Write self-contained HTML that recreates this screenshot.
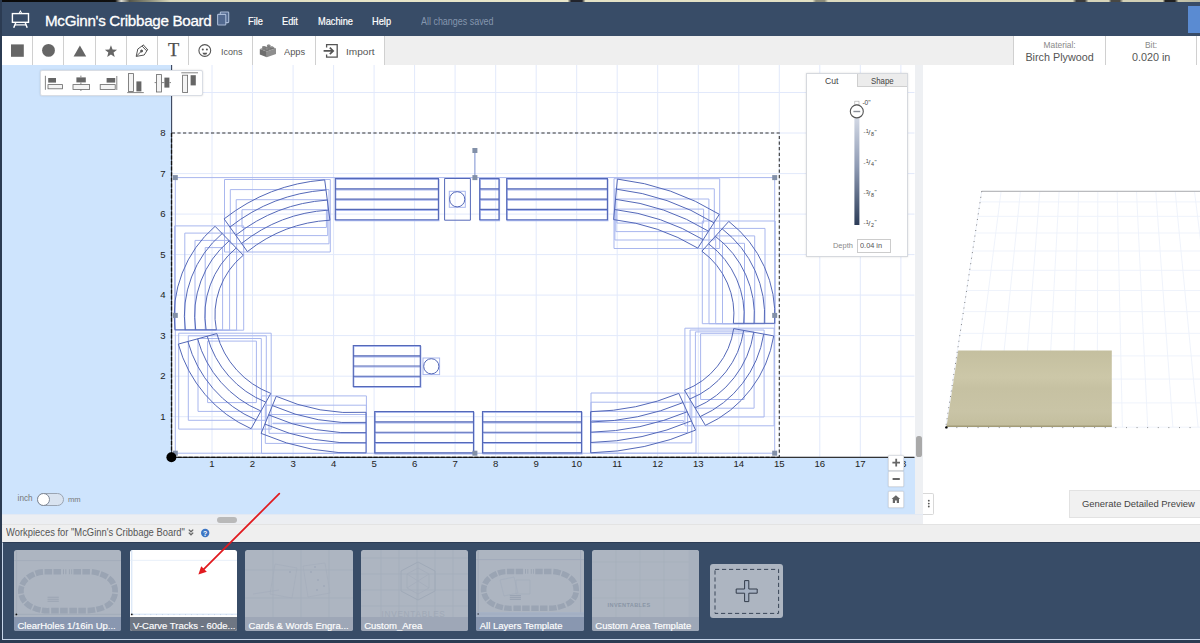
<!DOCTYPE html><html><head><meta charset="utf-8"><title>McGinn's Cribbage Board</title><style>
*{box-sizing:border-box;margin:0;padding:0}
html,body{width:1200px;height:643px;overflow:hidden;background:#fff}
body{position:relative;font-family:"Liberation Sans",sans-serif;color:#555}
.abs{position:absolute}
.t{position:absolute;white-space:nowrap;line-height:1}
#top{left:0;top:0;width:1200px;height:2.2px;background:linear-gradient(90deg,#0a0a0a 0,#101010 9.6%,#deded4 10.1%,#55564a 10.8%,#8f907c 12.5%,#d9d7ba 14.2%,#e6e4c8 30%,#e8e6ca 47.3%,#22242c 47.6%,#22242c 48.5%,#e4e2c6 48.8%,#e2e0c4 67.7%,#8a8a78 68%,#8a8a78 68.7%,#dddbc0 69%,#dbd9be 89.4%,#3a3a3a 89.7%,#3a3a3a 90.4%,#d6d4ba 90.7%,#d6d4ba 92.4%,#484844 92.6%,#484844 93.3%,#d2d0b6 93.6%,#d2d0b6 96.9%,#202020 97.1%,#202020 97.9%,#c8c6ac 98.2%,#b8b8a2 100%)}
#hdr{left:0;top:2px;width:1200px;height:34px;background:#384c67}
#tb{left:2px;top:36px;width:1198px;height:29.7px;background:#efefef;border-bottom:1px solid #d4d4d4}
.cell{position:absolute;top:36px;height:29px;background:#fff;border-right:1px solid #d0d0d0}
#left{left:0;top:65px;width:915px;height:450px;background:#cee4fd;overflow:hidden}
#canvas{left:172px;top:65px;width:742.5px;height:392px;background:#fff}
#lb{left:0;top:0;width:2px;height:643px;background:#2b3b52}
</style></head><body><div class="abs" id="top"></div>
<div class="abs" id="hdr"></div>
<div class="abs" style="left:1188px;top:6px;width:12px;height:27px;background:#5a8bd2"></div>
<svg class="abs" style="left:8px;top:8px" width="26" height="24" viewBox="8 8 26 24">
<g fill="none" stroke="#fff" stroke-width="1.4" stroke-linejoin="miter">
<rect x="12.4" y="13.6" width="16.1" height="8.7"/>
<path d="M15.7 23L13.7 27.8M25.3 23L27.2 27.8" stroke-width="1.5"/><path d="M14.8 24.9H26.2" stroke-width="1.2"/>
</g><path d="M18.6 13.2L20.4 9.9L22.2 13.2Z" fill="#fff"/><path d="M19.9 12.9L20.4 11.9L20.9 12.9Z" fill="#384c67"/></svg>
<div class="t" style="left:45px;top:12.7px;font-size:15.2px;color:#fff;-webkit-text-stroke:0.3px #fff;letter-spacing:-0.3px" id="title">McGinn's Cribbage Board</div>
<svg class="abs" style="left:215px;top:10px" width="16" height="18" viewBox="0 0 16 18"><g fill="#52698f" stroke="#a9bad6" stroke-width="1.1"><rect x="5.3" y="2" width="8.4" height="10.6" rx="0.8"/><rect x="2.6" y="4.4" width="8.2" height="10.6" rx="0.8"/></g></svg>
<div class="t" style="left:248.2px;top:17px;font-size:10.4px;color:#fff;-webkit-text-stroke:0.2px #fff;transform:scaleX(0.89);transform-origin:0 0" id="m1">File</div>
<div class="t" style="left:282px;top:17px;font-size:10.4px;color:#fff;-webkit-text-stroke:0.2px #fff;transform:scaleX(0.89);transform-origin:0 0" id="m2">Edit</div>
<div class="t" style="left:317.5px;top:17px;font-size:10.4px;color:#fff;-webkit-text-stroke:0.2px #fff;transform:scaleX(0.89);transform-origin:0 0" id="m3">Machine</div>
<div class="t" style="left:371.5px;top:17px;font-size:10.4px;color:#fff;-webkit-text-stroke:0.2px #fff;transform:scaleX(0.89);transform-origin:0 0" id="m4">Help</div>
<div class="t" style="left:420.5px;top:17.2px;font-size:10.3px;color:#8596ae;transform:scaleX(0.868);transform-origin:0 0" id="saved">All changes saved</div>
<div class="abs" id="tb"></div>
<div class="cell" style="left:2px;width:31.2px"></div>
<div class="cell" style="left:33.2px;width:31.2px"></div>
<div class="cell" style="left:64.4px;width:31.2px"></div>
<div class="cell" style="left:95.6px;width:31.2px"></div>
<div class="cell" style="left:126.8px;width:31.2px"></div>
<div class="cell" style="left:158px;width:31.2px"></div>
<div class="cell" style="left:189.2px;width:63.6px"></div>
<div class="cell" style="left:252.8px;width:62.9px"></div>
<div class="cell" style="left:315.7px;width:69.6px"></div>
<div class="cell" style="left:1012.8px;width:92.8px;border-left:1px solid #d0d0d0"></div>
<div class="cell" style="left:1105.6px;width:91.4px"></div>
<div class="cell" style="left:1197.4px;width:3px;border:0"></div>
<svg class="abs" style="left:0;top:36px" width="400" height="29" viewBox="0 36 400 29">
<g fill="#666">
<rect x="11" y="44.4" width="12.8" height="12.4"/>
<circle cx="48.5" cy="50.4" r="6.4"/>
<path d="M79.9 45.6L86.2 56.4H73.6Z"/>
<path d="M110.95 45.30L112.57 49.48L117.04 49.72L113.57 52.55L114.71 56.88L110.95 54.45L107.19 56.88L108.33 52.55L104.86 49.72L109.33 49.48Z"/>
</g>
<g fill="none" stroke="#555" stroke-width="1" stroke-linejoin="round">
<path d="M136.2 56.4l1.6-7.4 5.6-4 4.2 4.6-3.4 5.4zM136.4 56.2l4.6-4.6M143.4 45l-1.2 1.2 4.2 4.4 1.2-1.4"/>
<circle cx="141.6" cy="51" r="1" fill="#555"/>
<circle cx="204.8" cy="50.5" r="5.9" stroke-width="1.1"/>
<path d="M202.5 52.7h4.7a2.35 2.1 0 0 1-4.7 0z" fill="#555" stroke="none"/>
</g>
<circle cx="202.8" cy="49.4" r="1" fill="#555"/><circle cx="206.9" cy="49.4" r="1" fill="#555"/>
<path d="M259.8 48.9L266.8 51.6V57.3L259.8 54.4Z" fill="#6e6e6e"/>
<path d="M266.8 51.6L276 48.3V54L266.8 57.3Z" fill="#8e8e8e"/>
<path d="M259.8 48.9L268.6 45.9L276 48.3L266.8 51.6Z" fill="#808080"/>
<g fill="#6a6a6a"><ellipse cx="264" cy="47.3" rx="1.9" ry="1.05"/><ellipse cx="268.7" cy="45.8" rx="1.9" ry="1.05"/><ellipse cx="267" cy="49.4" rx="1.9" ry="1.05"/><ellipse cx="271.8" cy="47.7" rx="1.9" ry="1.05"/></g>
<g fill="#8c8c8c"><ellipse cx="264" cy="46.8" rx="1.7" ry="0.85"/><ellipse cx="268.7" cy="45.3" rx="1.7" ry="0.85"/><ellipse cx="267" cy="48.9" rx="1.7" ry="0.85"/><ellipse cx="271.8" cy="47.2" rx="1.7" ry="0.85"/></g>
<g fill="none" stroke="#555" stroke-width="1.5">
<path d="M326.6 47.4V44.6H337.2V57.2H326.6V54.6" stroke-width="1.3"/>
<path d="M323.6 50.9H333M329.8 47.6l3.4 3.3-3.4 3.3" stroke-width="1.7"/>
</g>
</svg>
<div class="t" style="left:168.1px;top:41.3px;font-size:18.4px;font-family:'Liberation Serif',serif;color:#4f4f4f;-webkit-text-stroke:0.25px #4f4f4f" id="ticon">T</div>
<div class="t" style="left:220.6px;top:46.6px;font-size:9.9px;color:#555;transform:scaleX(0.91);transform-origin:0 0" id="l1">Icons</div>
<div class="t" style="left:284px;top:46.6px;font-size:9.9px;color:#555;transform:scaleX(0.94);transform-origin:0 0" id="l2">Apps</div>
<div class="t" style="left:346.4px;top:46.6px;font-size:9.9px;color:#555;transform:scaleX(1.02);transform-origin:0 0" id="l3">Import</div>
<div class="t" style="left:1013.6px;width:92px;text-align:center;top:40.8px;font-size:8.4px;color:#888" id="mat1">Material:</div>
<div class="t" style="left:1013.6px;width:92px;text-align:center;top:52.2px;font-size:10.8px;color:#555" id="mat2">Birch Plywood</div>
<div class="t" style="left:1105.6px;width:91px;text-align:center;top:40.8px;font-size:8.4px;color:#888" id="bit1">Bit:</div>
<div class="t" style="left:1105.6px;width:91px;text-align:center;top:52.2px;font-size:10.8px;color:#555" id="bit2">0.020 in</div>
<div class="abs" id="left"></div>
<div class="abs" id="canvas"></div>
<svg class="abs" style="left:0;top:65px" width="915" height="450" viewBox="0 65 915 450"><path d="M171.5 65V457M212.0 65V457M252.5 65V457M293.1 65V457M333.6 65V457M374.1 65V457M414.6 65V457M455.1 65V457M495.7 65V457M536.2 65V457M576.7 65V457M617.2 65V457M657.7 65V457M698.3 65V457M738.8 65V457M779.3 65V457M819.8 65V457M860.3 65V457M900.9 65V457M172 457.2H914.5M172 416.7H914.5M172 376.2H914.5M172 335.6H914.5M172 295.1H914.5M172 254.6H914.5M172 214.1H914.5M172 173.6H914.5M172 133.0H914.5M172 92.5H914.5" stroke="#e2e9fb" stroke-width="1" fill="none"/><path d="M171.6 65V457.6" stroke="#39445c" stroke-width="1.1" fill="none"/><path d="M171 457.3H914.5" stroke="#333" stroke-width="1.2" fill="none"/><path d="M171.8 133H779.3V457" stroke="#333" stroke-width="1.1" stroke-dasharray="3.2 2.4" fill="none"/><path d="M171.5 133V457.3H779.3" stroke="#111" stroke-width="1.3" stroke-dasharray="4 1.6" fill="none"/><rect x="175.3" y="177.6" width="599.4" height="275.6" fill="none" stroke="#a9b7ee" stroke-width="1"/><path d="M474.9 177.6V150.5" stroke="#7a8fd0" stroke-width="1" fill="none"/><path d="M224.5 179.5H330.3V252.0H224.5ZM230.3 189.6H329.0V243.8H230.3ZM236.2 199.7H327.7V235.6H236.2ZM242.0 209.7H326.4V227.5H242.0ZM174.6 225.9H243.7V330.2H174.6ZM184.8 233.1H236.6V330.2H184.8ZM195.0 240.4H229.6V330.2H195.0ZM205.2 247.6H222.6V330.2H205.2ZM614.0 178.7H719.7V248.5H614.0ZM614.9 188.8H714.3V240.0H614.9ZM615.9 199.0H708.9V231.6H615.9ZM616.9 209.1H703.6V223.1H616.9ZM702.3 221.0H775.2V323.7H702.3ZM709.0 228.4H765.0V323.7H709.0ZM715.7 235.9H754.7V323.7H715.7ZM722.5 243.3H744.5V323.7H722.5ZM178.7 333.2H271.2V429.1H178.7ZM188.3 335.8H266.3V420.3H188.3ZM198.0 338.5H261.3V411.4H198.0ZM207.6 341.1H256.4V402.6H207.6ZM261.5 395.9H366.4V453.5H261.5ZM265.3 405.2H366.4V443.4H265.3ZM269.0 414.5H366.4V433.3H269.0ZM272.8 423.7H366.4V423.2H272.8ZM591.0 393.0H696.0V453.2H591.0ZM591.0 402.2H691.8V442.9H591.0ZM591.0 411.4H687.6V432.6H591.0ZM591.0 420.5H683.4V422.4H591.0ZM684.9 328.2H774.1V425.8H684.9ZM690.1 330.0H764.1V417.0H690.1ZM695.4 331.9H754.1V408.2H695.4ZM700.6 333.7H744.1V399.5H700.6Z" fill="none" stroke="#a9b7ee" stroke-width="1"/><rect x="449.3" y="191.3" width="16" height="16" fill="none" stroke="#a9b7ee" stroke-width="1"/><rect x="423" y="358" width="16.6" height="16.6" fill="none" stroke="#a9b7ee" stroke-width="1"/><path d="M224.1 218.9A186.4 186.4 0 0 1 324.7 179.9M229.9 227.1A176.1 176.1 0 0 1 326.0 190.0M235.8 235.2A165.8 165.8 0 0 1 327.3 200.1M241.6 243.4A155.5 155.5 0 0 1 328.6 210.1M247.4 251.6A145.2 145.2 0 0 1 329.9 220.2M224.1 218.9L247.4 251.6M324.7 179.9L329.9 220.2M175.0 329.8A118.6 118.6 0 0 1 215.1 226.3M185.3 329.8A108.3 108.3 0 0 1 222.2 233.5M195.7 329.8A98.0 98.0 0 0 1 229.2 240.8M206.1 329.8A87.7 87.7 0 0 1 236.2 248.0M216.4 329.8A77.4 77.4 0 0 1 243.3 255.2M175.0 329.8L216.4 329.8M215.1 226.3L243.3 255.2M617.4 179.1A249.6 249.6 0 0 1 719.3 214.3M616.5 189.2A239.3 239.3 0 0 1 713.9 222.8M615.5 199.3A229.0 229.0 0 0 1 708.5 231.2M614.5 209.5A218.7 218.7 0 0 1 703.2 239.7M613.6 219.6A208.4 208.4 0 0 1 697.8 248.1M617.4 179.1L613.6 219.6M719.3 214.3L697.8 248.1M728.8 221.4A119.5 119.5 0 0 1 774.6 323.3M722.1 228.8A109.2 109.2 0 0 1 764.3 323.3M715.3 236.3A98.9 98.9 0 0 1 754.0 323.3M708.6 243.8A88.6 88.6 0 0 1 743.7 323.3M701.9 251.2A78.3 78.3 0 0 1 733.4 323.3M728.8 221.4L701.9 251.2M774.6 323.3L733.4 323.3M178.3 344.1A130.3 130.3 0 0 0 251.1 428.7M187.9 341.5A120.0 120.0 0 0 0 256.0 419.9M197.6 338.9A109.7 109.7 0 0 0 260.9 411.0M207.2 336.2A99.4 99.4 0 0 0 265.9 402.2M216.8 333.6A89.1 89.1 0 0 0 270.8 393.4M178.3 344.1L216.8 333.6M251.1 428.7L270.8 393.4M261.1 433.4A232.3 232.3 0 0 0 366.0 452.8M264.9 424.1A222.0 222.0 0 0 0 366.0 442.7M268.6 414.9A211.7 211.7 0 0 0 366.0 432.6M272.4 405.6A201.4 201.4 0 0 0 366.0 422.4M276.2 396.3A191.1 191.1 0 0 0 366.0 412.3M261.1 433.4L276.2 396.3M366.0 452.8L366.0 412.3M590.6 452.8A282.8 282.8 0 0 0 695.6 430.1M590.6 442.5A272.5 272.5 0 0 0 691.4 420.9M590.6 432.2A262.2 262.2 0 0 0 687.2 411.8M590.6 422.0A251.9 251.9 0 0 0 683.0 402.6M590.6 411.7A241.6 241.6 0 0 0 678.8 393.4M590.6 452.8L590.6 411.7M695.6 430.1L678.8 393.4M773.7 335.9A119.0 119.0 0 0 1 705.4 425.4M763.7 334.1A108.7 108.7 0 0 1 700.2 416.6M753.7 332.2A98.4 98.4 0 0 1 695.0 407.9M743.7 330.4A88.1 88.1 0 0 1 689.7 399.1M733.7 328.6A77.8 77.8 0 0 1 684.5 390.3M773.7 335.9L733.7 328.6M705.4 425.4L684.5 390.3M444.6 178.5H470.4V220.2H444.6Z" fill="none" stroke="#5468b8" stroke-width="1"/><path d="M335.3 178.5H438.4V219.7H335.3ZM335.3 188.8H438.4M335.3 199.1H438.4M335.3 209.4H438.4M506.7 178.5H607.4V219.7H506.7ZM506.7 188.8H607.4M506.7 199.1H607.4M506.7 209.4H607.4M479.7 178.5H499.0V219.7H479.7ZM479.7 188.8H499.0M479.7 199.1H499.0M479.7 209.4H499.0M374.7 411.5H473.5V452.9H374.7ZM374.7 421.9H473.5M374.7 432.2H473.5M374.7 442.5H473.5M482.5 411.5H581.5V452.9H482.5ZM482.5 421.9H581.5M482.5 432.2H581.5M482.5 442.5H581.5M353.3 345.5H420.3V386.5H353.3ZM353.3 355.8H420.3M353.3 366.0H420.3M353.3 376.2H420.3" fill="none" stroke="#a9b7ee" stroke-width="1.2" transform="translate(0.5,1)"/><path d="M335.3 178.5H438.4V219.7H335.3ZM335.3 188.8H438.4M335.3 199.1H438.4M335.3 209.4H438.4M506.7 178.5H607.4V219.7H506.7ZM506.7 188.8H607.4M506.7 199.1H607.4M506.7 209.4H607.4M479.7 178.5H499.0V219.7H479.7ZM479.7 188.8H499.0M479.7 199.1H499.0M479.7 209.4H499.0M374.7 411.5H473.5V452.9H374.7ZM374.7 421.9H473.5M374.7 432.2H473.5M374.7 442.5H473.5M482.5 411.5H581.5V452.9H482.5ZM482.5 421.9H581.5M482.5 432.2H581.5M482.5 442.5H581.5M353.3 345.5H420.3V386.5H353.3ZM353.3 355.8H420.3M353.3 366.0H420.3M353.3 376.2H420.3" fill="none" stroke="#5468b8" stroke-width="1.15"/><circle cx="457.2" cy="199.3" r="7.6" fill="none" stroke="#5468b8" stroke-width="1"/><circle cx="431.3" cy="366.3" r="7.6" fill="none" stroke="#5468b8" stroke-width="1"/><rect x="172.8" y="175.1" width="5" height="5" fill="#8290a8"/><rect x="472.4" y="175.1" width="5" height="5" fill="#8290a8"/><rect x="772.2" y="175.1" width="5" height="5" fill="#8290a8"/><rect x="172.8" y="312.9" width="5" height="5" fill="#8290a8"/><rect x="772.2" y="312.9" width="5" height="5" fill="#8290a8"/><rect x="172.8" y="450.7" width="5" height="5" fill="#8290a8"/><rect x="472.4" y="450.7" width="5" height="5" fill="#8290a8"/><rect x="772.2" y="450.7" width="5" height="5" fill="#8290a8"/><rect x="472.4" y="148.0" width="5" height="5" fill="#8290a8"/><circle cx="171.4" cy="457.3" r="5" fill="#000"/><g font-family="Liberation Sans, sans-serif" font-size="9.6" fill="#222"><text x="212.0" y="467.3" text-anchor="middle">1</text><text x="252.5" y="467.3" text-anchor="middle">2</text><text x="293.1" y="467.3" text-anchor="middle">3</text><text x="333.6" y="467.3" text-anchor="middle">4</text><text x="374.1" y="467.3" text-anchor="middle">5</text><text x="414.6" y="467.3" text-anchor="middle">6</text><text x="455.1" y="467.3" text-anchor="middle">7</text><text x="495.7" y="467.3" text-anchor="middle">8</text><text x="536.2" y="467.3" text-anchor="middle">9</text><text x="576.7" y="467.3" text-anchor="middle">10</text><text x="617.2" y="467.3" text-anchor="middle">11</text><text x="657.7" y="467.3" text-anchor="middle">12</text><text x="698.3" y="467.3" text-anchor="middle">13</text><text x="738.8" y="467.3" text-anchor="middle">14</text><text x="779.3" y="467.3" text-anchor="middle">15</text><text x="819.8" y="467.3" text-anchor="middle">16</text><text x="860.3" y="467.3" text-anchor="middle">17</text><text x="900.9" y="467.3" text-anchor="middle">18</text><text x="165.6" y="419.9" text-anchor="end">1</text><text x="165.6" y="379.4" text-anchor="end">2</text><text x="165.6" y="338.8" text-anchor="end">3</text><text x="165.6" y="298.3" text-anchor="end">4</text><text x="165.6" y="257.8" text-anchor="end">5</text><text x="165.6" y="217.3" text-anchor="end">6</text><text x="165.6" y="176.8" text-anchor="end">7</text><text x="165.6" y="136.2" text-anchor="end">8</text></g></svg>
<div class="abs" style="left:39.6px;top:70px;width:163.8px;height:26px;background:#fff;border:1px solid #d9dde4;border-radius:2px;box-shadow:0 0 2px rgba(0,0,0,.15)"></div>
<svg class="abs" style="left:40px;top:70px" width="164" height="26" viewBox="40 70 164 26">
<g fill="#666">
<rect x="48.2" y="78" width="7.8" height="4.6"/><rect x="76.4" y="77.4" width="9.4" height="5"/><rect x="106.6" y="78" width="8.6" height="4.6"/>
<rect x="136.4" y="81.4" width="5" height="10"/><rect x="164.4" y="77.6" width="5" height="10"/><rect x="190.6" y="75.2" width="5.2" height="10.2"/>
</g>
<g fill="#f4f4f4" stroke="#666" stroke-width="0.8">
<rect x="48" y="84.6" width="14.4" height="4.2"/><rect x="73" y="84.6" width="16.6" height="4.8"/><rect x="100.2" y="84.6" width="15" height="4.8"/>
<rect x="128.4" y="73.6" width="5.2" height="17.8"/><rect x="156.4" y="74.6" width="5.2" height="17.4"/><rect x="182.6" y="75.2" width="5" height="17.2"/>
</g>
<g stroke="#777" stroke-width="0.9" fill="none">
<path d="M45.4 75.8V89.8M80.9 75.6V77.4M80.9 82.4V84.6M80.9 89.4V91M116.8 76V90M127.2 92.6H143.8M154.6 82.6H156.4M161.6 82.6H164.4M169.4 82.6H171M181.3 72.8H198"/>
</g></svg>
<div class="abs" style="left:806.4px;top:73px;width:101.4px;height:184.2px;background:#fff;border:1px solid #d6d9de;box-shadow:0 0 2px rgba(0,0,0,.12)"></div>
<div class="abs" style="left:856.8px;top:73.6px;width:50.6px;height:13.6px;background:#ececec;border-left:1px solid #cfcfcf;border-bottom:1px solid #cfcfcf"></div>
<div class="t" style="left:824.6px;top:77.4px;font-size:9px;color:#444;transform:scaleX(0.96);transform-origin:0 0" id="cut">Cut</div>
<div class="t" style="left:871px;top:77.4px;font-size:9px;color:#444;transform:scaleX(0.87);transform-origin:0 0" id="shape">Shape</div>
<svg class="abs" style="left:807px;top:88px" width="100" height="168" viewBox="807 88 100 168">
<defs><linearGradient id="sl" x1="0" y1="0" x2="0" y2="1"><stop offset="0" stop-color="#dfe4ee"/><stop offset="0.5" stop-color="#8f9bb4"/><stop offset="1" stop-color="#2c3c58"/></linearGradient></defs>
<rect x="854.4" y="108" width="5" height="117" fill="url(#sl)"/>
<rect x="854.8" y="101.2" width="4.2" height="3.4" fill="#fff" stroke="#aaa" stroke-width="0.6"/>
<circle cx="856.8" cy="111.4" r="6.5" fill="#fff" stroke="#555" stroke-width="1.1"/>
<path d="M853.4 111.5H860.2" stroke="#8a8f99" stroke-width="1.4"/>
<g font-family="Liberation Sans, sans-serif" font-size="6.6" fill="#444">
<text x="862.4" y="104.6">-0"</text>
</g>
<g font-family="Liberation Sans, sans-serif" fill="#444"><text x="863.6" y="134.4" font-size="6">-</text><text x="865.8" y="133.2" font-size="5.4">1</text><text x="868.3" y="135.2" font-size="7.6">/</text><text x="870.9" y="136.2" font-size="5.4">8</text><text x="874.6" y="133.8" font-size="6">"</text><text x="863.6" y="164.6" font-size="6">-</text><text x="865.8" y="163.4" font-size="5.4">1</text><text x="868.3" y="165.4" font-size="7.6">/</text><text x="870.9" y="166.4" font-size="5.4">4</text><text x="874.6" y="164.0" font-size="6">"</text><text x="863.6" y="194.8" font-size="6">-</text><text x="865.8" y="193.6" font-size="5.4">3</text><text x="868.3" y="195.6" font-size="7.6">/</text><text x="870.9" y="196.6" font-size="5.4">8</text><text x="874.6" y="194.2" font-size="6">"</text><text x="863.6" y="225.0" font-size="6">-</text><text x="865.8" y="223.8" font-size="5.4">1</text><text x="868.3" y="225.8" font-size="7.6">/</text><text x="870.9" y="226.8" font-size="5.4">2</text><text x="874.6" y="224.4" font-size="6">"</text></g></svg>
<div class="t" style="left:833px;top:242.2px;font-size:8px;color:#888;transform:scaleX(0.93);transform-origin:0 0" id="depth">Depth</div>
<div class="abs" style="left:857px;top:238.7px;width:33.8px;height:14px;background:#fff;border:1px solid #ccc"></div>
<div class="t" style="left:859.6px;top:242.2px;font-size:8px;color:#555;transform:scaleX(0.92);transform-origin:0 0" id="dval">0.04 in</div>
<div class="abs" style="left:914.5px;top:65px;width:8.7px;height:451px;background:#eef0f3"></div>
<div class="abs" style="left:916.1px;top:436.2px;width:5.7px;height:20.4px;background:#a9a9a9;border-radius:2.6px"></div>
<div class="abs" style="left:888px;top:454.6px;width:15.8px;height:16.2px;background:#fff;border:1px solid #dcdfe4;border-radius:1.5px;box-shadow:0 0 1.5px rgba(0,0,0,.2)"></div>
<div class="abs" style="left:888px;top:471px;width:15.8px;height:16.4px;background:#fff;border:1px solid #dcdfe4;border-radius:1.5px;box-shadow:0 0 1.5px rgba(0,0,0,.2)"></div>
<div class="abs" style="left:888px;top:491.2px;width:15.8px;height:16.8px;background:#fff;border:1px solid #dcdfe4;border-radius:1.5px;box-shadow:0 0 1.5px rgba(0,0,0,.2)"></div>
<svg class="abs" style="left:888px;top:454px" width="16" height="54" viewBox="888 454 16 54">
<path d="M892.4 462.6H900M896.2 458.8V466.4M892.6 479H899.8" stroke="#666" stroke-width="1.8" fill="none"/>
<path d="M895.9 495.2l-4.3 3.9h1.2v3.9h2.2v-2.6h1.8v2.6h2.2v-3.9h1.2z" fill="#666"/>
</svg>
<div class="t" style="left:17.6px;top:495.4px;font-size:8.2px;color:#777" id="inch">inch</div>
<div class="abs" style="left:36.6px;top:492.6px;width:27px;height:13.4px;border-radius:7px;background:#d9e3f0;border:1px solid #9aa4b2"></div>
<div class="abs" style="left:36.8px;top:492.8px;width:13px;height:13px;border-radius:7px;background:#fff;border:1px solid #7d8796"></div>
<div class="t" style="left:68px;top:495.6px;font-size:7.6px;color:#777" id="mm">mm</div>
<div class="abs" style="left:923.2px;top:65px;width:277px;height:459px;background:#fff"></div>
<svg class="abs" style="left:923px;top:65px" width="277" height="451" viewBox="923 65 277 451"><path d="M981.7 191.3L945.8 427.2M1001.1 191.3L971.0 427.2M1020.4 191.3L996.3 427.2M1039.8 191.3L1021.5 427.2M1059.1 191.3L1046.7 427.2M1078.5 191.3L1072.0 427.2M1097.8 191.3L1097.2 427.2M1117.2 191.3L1122.4 427.2M1136.5 191.3L1147.7 427.2M1155.8 191.3L1172.9 427.2M1175.2 191.3L1198.1 427.2M1194.5 191.3L1223.4 427.2M1213.9 191.3L1248.6 427.2M1233.2 191.3L1273.8 427.2M1252.6 191.3L1299.1 427.2M1272.0 191.3L1324.3 427.2M1291.3 191.3L1349.5 427.2M1310.7 191.3L1374.8 427.2M1330.0 191.3L1400.0 427.2M981.7 191.3L1330.0 191.3M980.1 201.9L1333.1 201.9M977.9 216.4L1337.5 216.4M975.4 233.0L1342.4 233.0M972.6 251.0L1347.7 251.0M969.7 270.3L1353.4 270.3M966.6 290.5L1359.4 290.5M963.4 311.6L1365.7 311.6M960.1 333.4L1372.2 333.4M956.6 355.9L1378.9 355.9M953.1 379.1L1385.7 379.1M949.5 402.9L1392.8 402.9M945.8 427.2L1400.0 427.2" stroke="#edf2fa" stroke-width="0.9" fill="none"/><path d="M981.7 191.3H1200" stroke="#9a9a9a" stroke-width="0.8" fill="none"/><path d="M981.7 191.3L945.8 427.4" stroke="#666" stroke-width="0.9" stroke-dasharray="0.9 4.7" fill="none"/><path d="M945.8 427.6H1200" stroke="#777" stroke-width="0.9" stroke-dasharray="0.9 9.7" fill="none"/><defs><linearGradient id="wd" x1="0" y1="0" x2="0" y2="1"><stop offset="0" stop-color="#c4bf9f"/><stop offset="0.35" stop-color="#ccc7a8"/><stop offset="0.5" stop-color="#c6c1a2"/><stop offset="0.8" stop-color="#c9c4a6"/><stop offset="1" stop-color="#c3be9e"/></linearGradient></defs><path d="M958.2 350.6H1111.8V426.2H946.6Z" fill="url(#wd)"/><path d="M946.6 426.2H1111.8" stroke="#a39c78" stroke-width="1.4" fill="none"/><circle cx="946.4" cy="427.4" r="1.2" fill="#000"/></svg>
<div class="abs" style="left:923.4px;top:492.8px;width:10.5px;height:21.9px;background:#fff;border:1px solid #d8d8d8;border-left:0;border-radius:0 2px 2px 0"></div>
<svg class="abs" style="left:924px;top:496px" width="10" height="16" viewBox="0 0 10 16"><g fill="#555"><circle cx="4.8" cy="4.7" r="0.9"/><circle cx="4.8" cy="7.6" r="0.9"/><circle cx="4.8" cy="10.5" r="0.9"/></g></svg>
<div class="abs" style="left:1069px;top:489.6px;width:131px;height:28.6px;background:#f1f1f1;border:1px solid #e2e2e2;border-right:0"></div>
<div class="t" style="left:1082px;top:498.6px;font-size:9.7px;color:#444;transform:scaleX(0.975);transform-origin:0 0" id="gen">Generate Detailed Preview</div>
<div class="abs" style="left:2px;top:514.4px;width:921.2px;height:9.6px;background:#eceef2;border-top:1px solid #e3e9f3"></div>
<div class="abs" style="left:216.6px;top:516.8px;width:20.8px;height:5.8px;background:#b9b9b9;border-radius:3px"></div>
<div class="abs" style="left:2px;top:524px;width:1198px;height:18.4px;background:#efefef;border-top:1px solid #e3e3e3"></div>
<div class="t" style="left:5.6px;top:527.7px;font-size:10.2px;color:#555;transform:scaleX(0.921);transform-origin:0 0" id="wp">Workpieces for "McGinn's Cribbage Board"</div>
<svg class="abs" style="left:187px;top:528px" width="26" height="10" viewBox="187 528 26 10"><path d="M188.8 529.6l2.2 2.2 2.2-2.2M188.8 532.6l2.2 2.2 2.2-2.2" stroke="#666" stroke-width="1.3" fill="none"/><circle cx="205.2" cy="533" r="4.2" fill="#3d76c4"/><text x="205.2" y="535.5" font-family="Liberation Sans, sans-serif" font-weight="bold" font-size="7" fill="#fff" text-anchor="middle">?</text></svg>
<div class="abs" style="left:0;top:542.4px;width:1200px;height:100.6px;background:#2b3b52"></div>
<div class="abs" style="left:2px;top:542.4px;width:1198px;height:98px;background:#384c67;border-left:1px solid #c8d6ea;border-bottom:1px solid #c8d6ea;border-top:1px solid #2c3c55"></div>
<div class="abs" style="left:14.1px;top:550.3px;width:107.4px;height:81.2px;background:#adb5c1;border-radius:2.5px;overflow:hidden" id="th0"><svg class="abs" style="left:0;top:0" width="108" height="82" viewBox="0 0 108 82"><path d="M2.6 0V64.4M0 10.6H108M0 64.4H108" stroke="#a0a9b8" stroke-width="0.8" fill="none"/><g transform="translate(-26,-11.4) scale(0.1686 0.1666)"><path d="M235.8 235.2A165.8 165.8 0 0 1 327.3 200.1M195.7 329.8A98.0 98.0 0 0 1 229.2 240.8M615.5 199.3A229.0 229.0 0 0 1 708.5 231.2M715.3 236.3A98.9 98.9 0 0 1 754.0 323.3M197.6 338.9A109.7 109.7 0 0 0 260.9 411.0M268.6 414.9A211.7 211.7 0 0 0 366.0 432.6M590.6 432.2A262.2 262.2 0 0 0 687.2 411.8M753.7 332.2A98.4 98.4 0 0 1 695.0 407.9M335.3 199.0H438.4M506.7 199.0H607.4M374.7 432.0H473.5M482.5 432.0H581.5" fill="none" stroke="#9aa4b3" stroke-width="34" stroke-dasharray="45 8"/><path d="M444.6 199H470.4M479.7 199H499" fill="none" stroke="#9aa4b3" stroke-width="30" stroke-dasharray="6 8"/><path d="M353 352H420M353 364H420M353 376H420" fill="none" stroke="#9aa4b3" stroke-width="7"/></g><circle cx="2.4" cy="64.4" r="0.9" fill="#111"/></svg><div class="abs" style="left:0;top:66.6px;width:108px;height:15.2px;background:#8595af;opacity:0.92"></div><div class="t" style="left:3.4px;top:70.4px;font-size:9.5px;color:#fff;-webkit-text-stroke:0.15px #fff" id="tn0">ClearHoles 1/16in Up...</div></div>
<div class="abs" style="left:129.7px;top:550.3px;width:107.4px;height:81.2px;background:#fff;border-radius:2.5px;overflow:hidden" id="th1"><svg class="abs" style="left:0;top:0" width="108" height="82" viewBox="0 0 108 82"><path d="M1.8 0V64.2H108" stroke="#cfe0f6" stroke-width="1" fill="none"/><path d="M0 10.4H108" stroke="#e4ecf8" stroke-width="0.8" fill="none"/><path d="M3 64.6H108" stroke="#b7c7dd" stroke-width="0.8" stroke-dasharray="0.8 5" fill="none"/><circle cx="1.8" cy="64.4" r="0.9" fill="#111"/></svg><div class="abs" style="left:0;top:66.6px;width:108px;height:15.2px;background:#6e7683;opacity:1"></div><div class="t" style="left:3.4px;top:70.4px;font-size:9.5px;color:#fff;-webkit-text-stroke:0.15px #fff" id="tn1">V-Carve Tracks - 60de...</div></div>
<div class="abs" style="left:245.2px;top:550.3px;width:107.4px;height:81.2px;background:#adb5c1;border-radius:2.5px;overflow:hidden" id="th2"><svg class="abs" style="left:0;top:0" width="108" height="82" viewBox="0 0 108 82"><g fill="none" stroke="#a5aebc" stroke-width="0.7"><path d="M0 20H108M0 48H108M28 0V68M56 0V68M84 0V68"/><path d="M30 14l22 4-5 30-22-4zM58 16l22-3 5 30-22 4z" stroke="#a5aebc"/><path d="M8 44l26-4"/></g><g fill="#a1aab8"><circle cx="66" cy="22" r="1"/><circle cx="70" cy="17" r="1"/><circle cx="73" cy="30" r="1"/><circle cx="79" cy="36" r="1"/><circle cx="72" cy="40" r="1"/><circle cx="45" cy="22" r="1"/></g></svg><div class="abs" style="left:0;top:66.6px;width:108px;height:15.2px;background:#9ca6b6;opacity:0.92"></div><div class="t" style="left:3.4px;top:70.4px;font-size:9.5px;color:#fff;-webkit-text-stroke:0.15px #fff" id="tn2">Cards &amp; Words Engra...</div></div>
<div class="abs" style="left:360.8px;top:550.3px;width:107.4px;height:81.2px;background:#adb5c1;border-radius:2.5px;overflow:hidden" id="th3"><svg class="abs" style="left:0;top:0" width="108" height="82" viewBox="0 0 108 82"><g fill="none" stroke="#a5aebc" stroke-width="0.7"><path d="M0 8H108M0 24H108M0 40H108M0 56H108M20 0V68M38 0V68M56 0V68M74 0V68M92 0V68"/><path d="M57 12l17 9v20l-17 9-17-9V21z" stroke="#a0aab8" stroke-width="1"/><path d="M57 18l11 6v14l-11 6-11-6V24zM57 12V50M46 24l22 14M68 24L46 38" stroke="#a3acba"/></g><text x="20.5" y="66.6" font-family="Liberation Sans, sans-serif" font-size="8.2" letter-spacing="0.75" fill="#a0a9b7">INVENTABLES</text></svg><div class="abs" style="left:0;top:66.6px;width:108px;height:15.2px;background:#9ca6b6;opacity:0.92"></div><div class="t" style="left:3.4px;top:70.4px;font-size:9.5px;color:#fff;-webkit-text-stroke:0.15px #fff" id="tn3">Custom_Area</div></div>
<div class="abs" style="left:476.3px;top:550.3px;width:107.4px;height:81.2px;background:#adb5c1;border-radius:2.5px;overflow:hidden" id="th4"><svg class="abs" style="left:0;top:0" width="108" height="82" viewBox="0 0 108 82"><path d="M2.2 0V64M0 9.6H108M0 64H108M104.6 0V64" stroke="#9da7b8" stroke-width="0.8" fill="none"/><g transform="translate(-24.6,-10) scale(0.1655 0.158)"><path d="M235.8 235.2A165.8 165.8 0 0 1 327.3 200.1M195.7 329.8A98.0 98.0 0 0 1 229.2 240.8M615.5 199.3A229.0 229.0 0 0 1 708.5 231.2M715.3 236.3A98.9 98.9 0 0 1 754.0 323.3M197.6 338.9A109.7 109.7 0 0 0 260.9 411.0M268.6 414.9A211.7 211.7 0 0 0 366.0 432.6M590.6 432.2A262.2 262.2 0 0 0 687.2 411.8M753.7 332.2A98.4 98.4 0 0 1 695.0 407.9M335.3 199.0H438.4M506.7 199.0H607.4M374.7 432.0H473.5M482.5 432.0H581.5" fill="none" stroke="#9aa4b3" stroke-width="34" stroke-dasharray="45 8"/><path d="M444.6 199H470.4M479.7 199H499" fill="none" stroke="#9aa4b3" stroke-width="30" stroke-dasharray="6 8"/><path d="M353 352H420M353 364H420M353 376H420" fill="none" stroke="#9aa4b3" stroke-width="7"/></g><g fill="none" stroke="#a4adbb" stroke-width="0.7"><path d="M24 30l14-3 4 16-14 3zM40 30h14v14H40z"/></g><circle cx="2.2" cy="64" r="0.9" fill="#111"/><rect x="0" y="62" width="108" height="6" fill="#9fb0c9" opacity="0.5"/></svg><div class="abs" style="left:0;top:66.6px;width:108px;height:15.2px;background:#8595af;opacity:0.92"></div><div class="t" style="left:3.4px;top:70.4px;font-size:9.5px;color:#fff;-webkit-text-stroke:0.15px #fff" id="tn4">All Layers Template</div></div>
<div class="abs" style="left:591.9px;top:550.3px;width:107.4px;height:81.2px;background:#adb5c1;border-radius:2.5px;overflow:hidden" id="th5"><svg class="abs" style="left:0;top:0" width="108" height="82" viewBox="0 0 108 82"><g fill="none" stroke="#a6afbc" stroke-width="0.7"><path d="M0 12H108M0 30H108M0 48H108M24 0V68M48 0V68M72 0V68"/></g><rect x="96.6" y="0" width="11" height="82" fill="#a8b1be"/><text x="15.6" y="57.4" font-family="Liberation Sans, sans-serif" font-weight="bold" font-size="5.6" letter-spacing="0.35" fill="#8a95a6">INVENTABLES</text></svg><div class="abs" style="left:0;top:66.6px;width:108px;height:15.2px;background:#9ca6b6;opacity:0.92"></div><div class="t" style="left:3.4px;top:70.4px;font-size:9.5px;color:#fff;-webkit-text-stroke:0.15px #fff" id="tn5">Custom Area Template</div></div>
<div class="abs" style="left:710px;top:564.4px;width:73.4px;height:54px;background:#adb5c1;border-radius:3px"></div>
<svg class="abs" style="left:710px;top:564px" width="74" height="55" viewBox="710 564 74 55"><rect x="715" y="569.4" width="63.6" height="44" fill="none" stroke="#3a4658" stroke-width="1" stroke-dasharray="4.2 2.8"/><path d="M744.6 580.6h4.2v8.4h8.4v4.2h-8.4v8.4h-4.2v-8.4h-8.4v-4.2h8.4z" fill="#a6b1c2" stroke="#333c4a" stroke-width="1"/></svg>
<svg class="abs" style="left:190px;top:485px" width="100" height="100" viewBox="190 485 100 100"><path d="M279.3 493.7L201.6 571.4" stroke="#e11a1f" stroke-width="1.7" fill="none" stroke-linecap="round"/><path d="M198.4 574.6L201.2 566.2L206.8 571.8Z" fill="#e11a1f"/></svg>
<div class="abs" id="lb"></div></body></html>
